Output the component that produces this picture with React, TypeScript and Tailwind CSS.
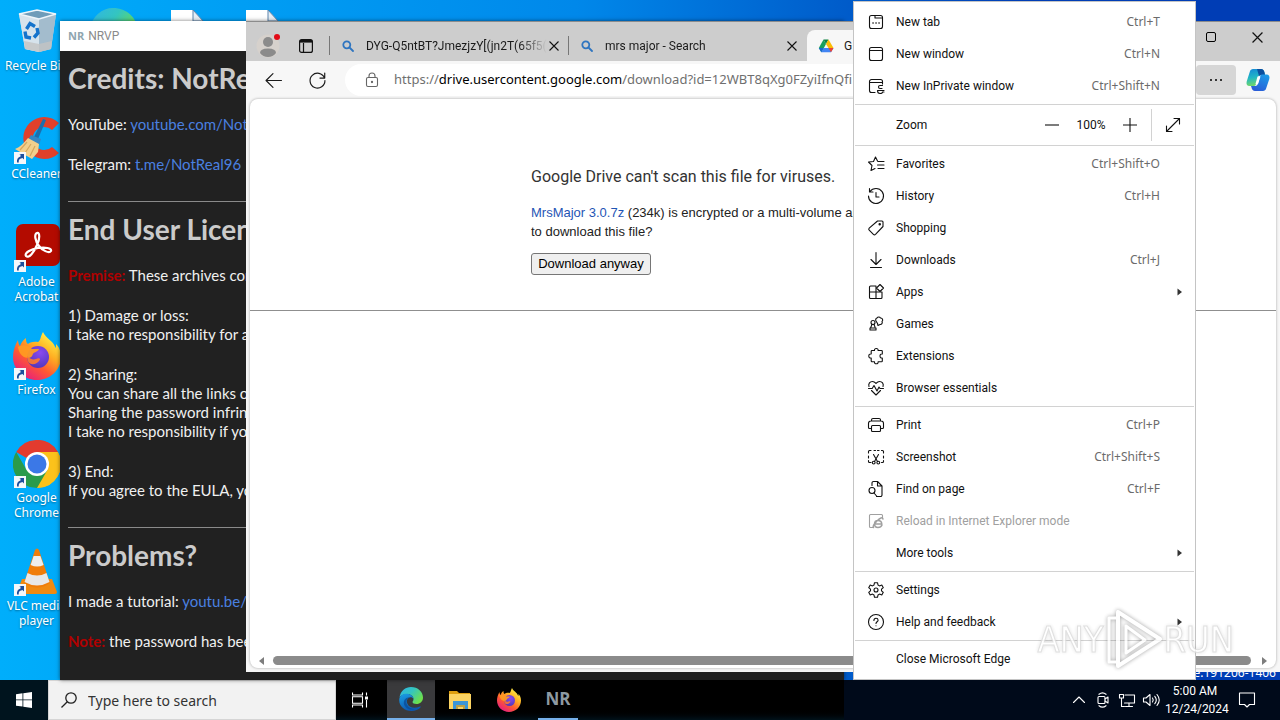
import type { ReactNode } from "react";

const ui = "font-['Noto_Sans','Open_Sans',sans-serif]";
const compact = "font-['Roboto','Noto_Sans',sans-serif]";

function Line({ size = 16, children, className = "" }: { size?: number; children: ReactNode; className?: string }) {
  return (
    <svg
      width={size}
      height={size}
      viewBox="0 0 16 16"
      fill="none"
      stroke="currentColor"
      strokeWidth="1.1"
      strokeLinecap="round"
      strokeLinejoin="round"
      aria-hidden="true"
      className={`shrink-0 overflow-visible ${className}`}
    >
      {children}
    </svg>
  );
}

/* ---------- colour logos ---------- */

function EdgeLogo({ size, id }: { size: number; id: string }) {
  return (
    <svg width={size} height={size} viewBox="0 0 24 24" aria-hidden="true" className="shrink-0">
      <defs>
        <linearGradient id={`${id}a`} x1="0" y1="0" x2="1" y2="0.6">
          <stop offset="0" stopColor="#2fb4e8" />
          <stop offset="0.5" stopColor="#34c5c0" />
          <stop offset="1" stopColor="#6ee04a" />
        </linearGradient>
        <linearGradient id={`${id}b`} x1="0" y1="0" x2="0.4" y2="1">
          <stop offset="0" stopColor="#1a9fe6" />
          <stop offset="1" stopColor="#0d57b0" />
        </linearGradient>
      </defs>
      <path d="M0.5 10.500C1.500 4 6.500 0 12 0c7 0 12 5 12 10.500 0 4-3 6.500-6.500 6.500-2.500 0-4-1-4-2 0-.7 1-1 1-3 0-2.500-2.500-5-6-5S1.500 8.500.5 10.500z" fill={`url(#${id}a)`} />
      <path d="M0.300 12C.8 8.500 4 6.800 7.500 6.800c4 0 7 2.400 7 5.200-.8-1.500-2-2-3.200-1.800C8 10.800 7 14 8.500 17c2 4 7 4.800 12.500 2.500.6-.2 1 .2.600.7C19.500 22.800 16 24 12.500 24 5 24-.5 18.500.3 12z" fill={`url(#${id}b)`} />
      <path d="M11.300 10.200C7.500 11 6.500 15 8.200 18c1.600 2.800 4.300 4 7.300 3.900-3 1.500-8 .6-10-3.400-1.800-3.700 0-8.500 5.800-8.300z" fill="#0a4a96" opacity=".75" />
    </svg>
  );
}

function FirefoxLogo({ size, id }: { size: number; id: string }) {
  return (
    <svg width={size} height={size} viewBox="0 0 48 48" aria-hidden="true" className="shrink-0">
      <defs>
        <linearGradient id={`${id}a`} x1="0.85" y1="0.1" x2="0.25" y2="0.95">
          <stop offset="0" stopColor="#fff14a" />
          <stop offset="0.35" stopColor="#ffae22" />
          <stop offset="0.65" stopColor="#ff5a30" />
          <stop offset="1" stopColor="#e8207c" />
        </linearGradient>
        <radialGradient id={`${id}b`} cx="0.6" cy="0.3" r="0.8">
          <stop offset="0" stopColor="#8a4af0" />
          <stop offset="1" stopColor="#4a35b5" />
        </radialGradient>
      </defs>
      <path d="M30 0c-3 5-2 8-5 10-5-1-9 1-10 2-2-1-2-4-2-6-3 2-5 5-6 8-1-1-2-4-2-6C2 13 0 19 0 25c0 13 11 23 24 23s24-10 24-23c0-6-2-10-5-13 0 2 0 3-.5 4C40 8 33 7 30 0z" fill={`url(#${id}a)`} />
      <circle cx="25" cy="25" r="11" fill={`url(#${id}b)`} />
      <path d="M5 15c5-3 10-2 14 2h7c-1 3-5 3-6 5-1 1 0 3-4 4-5 0-10-3-11-11z" fill="#ff9a22" opacity=".95" />
      <path d="M14 24c3 3 6 4 9 3 2-1 4-1 4 .5-2 4-7 6-10 4-2-1-3-4-3-7.500z" fill="#ff7a2a" opacity=".9" />
    </svg>
  );
}

function RecycleBin() {
  return (
    <svg width="48" height="48" viewBox="0 0 48 48" aria-hidden="true">
      <path d="M6 6 24 2l19 4-5 35-12 3-14-3z" fill="#c8d6e0" />
      <path d="M6 6l20 5v33l-14-3z" fill="#d6e3ec" />
      <path d="M26 11l17-5-5 35-12 3z" fill="#a3bccd" />
      <path d="M6 6 24 2l19 4-17 5z" fill="#6f9cb9" stroke="#eef5fa" strokeWidth="1.400" />
      <path d="M11 33l15 3 13-3-1 8-12 3-14-3z" fill="#c3c3c3" opacity=".8" />
      <g fill="none" stroke="#1473cc" strokeWidth="3.400">
        <path d="M13.500 21l3.500-5.500 5 3" />
        <path d="M24 20l1 5-4 4.500" />
        <path d="M18 30l-5-1-1-5.500" />
      </g>
    </svg>
  );
}

function CCleanerLogo() {
  return (
    <svg width="48" height="48" viewBox="0 0 48 48" aria-hidden="true">
      <path d="M46 7A21 21 0 1 0 46 37l-7-6a11.500 11.500 0 1 1 0-17z" fill="#e0402b" />
      <path d="M30 3l3 1-8 19-4-2z" fill="#1b6fae" />
      <path d="M18 19l10 4-2 6-11-5z" fill="#3587c4" />
      <path d="M15 22l11 6-1 8-6 7L2 33c5-2 9-6 13-11z" fill="#f2cf8c" />
      <path d="M14 26l-7 8M18 28l-6 9M22 30l-5 10" stroke="#d5a75e" strokeWidth="1.200" />
    </svg>
  );
}

function AcrobatLogo() {
  return (
    <svg width="48" height="48" viewBox="0 0 48 48" aria-hidden="true">
      <rect x="3" y="0" width="44" height="42" rx="7" fill="#b30b00" />
      <path d="M13 32c-2-3 5-7 12-8s14 0 13 3c-2 3-9-1-12-5-4-5-5-12-2-13s3 6 0 12c-3 7-8 14-11 11z" fill="none" stroke="#fff" strokeWidth="2.200" />
    </svg>
  );
}

function ChromeLogo() {
  return (
    <svg width="48" height="48" viewBox="0 0 48 48" aria-hidden="true">
      <path d="M24 24 3.200 12A24 24 0 0 1 44.800 12z" fill="#e33b2e" />
      <path d="M24 24V0a24 24 0 0 1 20.800 12H24z" fill="#e33b2e" />
      <path d="M24 24 44.800 12A24 24 0 0 1 24 48z" fill="#fcc21b" />
      <path d="M24 12h20.800A24 24 0 0 1 24 48l10.400-18z" fill="#fcc21b" />
      <path d="M3.200 12A24 24 0 0 0 24 48l10.400-18L24 24l-10.400 6z" fill="#2a9b4b" />
      <circle cx="24" cy="24" r="12" fill="#fff" />
      <circle cx="24" cy="24" r="9.500" fill="#3b78e7" />
    </svg>
  );
}

function VlcLogo() {
  return (
    <svg width="48" height="48" viewBox="0 0 48 48" aria-hidden="true">
      <path d="M9 31h30l5 13a2 2 0 0 1-2 2H6a2 2 0 0 1-2-2z" fill="#f08a12" />
      <path d="M22 2q2-3 4 0l11 33q-13 9-26 0z" fill="#f07d0a" />
      <path d="M20.600 8h6.800l3.200 9q-6.500 3-13 0z" fill="#eee" />
      <path d="M14.500 25q9.500 5 19 0l3 9q-12.500 7-25 0z" fill="#e8e8e8" />
    </svg>
  );
}

function ExplorerLogo() {
  return (
    <svg width="24" height="24" viewBox="0 0 24 24" aria-hidden="true">
      <path d="M1 3h8l2 2h11v4H1z" fill="#dfa010" />
      <path d="M1 6h22v15H1z" fill="#fcd462" />
      <path d="M5 13h15v8h-3v-4H8v4H5z" fill="#3b96d6" />
      <path d="M8 17h9v4h-2v-2h-5v2H8z" fill="#7a6a2a" opacity=".5" />
    </svg>
  );
}

function DriveLogo() {
  return (
    <svg width="16" height="16" viewBox="0 0 16 16" aria-hidden="true" className="shrink-0">
      <path d="M5.500 1.500 8 6 3.500 14.300.8 10z" fill="#18a05d" />
      <path d="M5.500 1.500h5L8 6z" fill="#0b8043" />
      <path d="M10.500 1.500 15.500 10h-5L8 6z" fill="#fbbc04" />
      <path d="M5.500 10h10l-2.500 4.300H3.200z" fill="#4285f4" />
      <path d="M10.500 10h5L13 14.300z" fill="#ea4335" />
      <path d="M.8 10h4.700L3.200 14.300z" fill="#1967d2" />
    </svg>
  );
}

function CopilotLogo() {
  return (
    <svg width="24" height="24" viewBox="0 0 24 24" aria-hidden="true">
      <defs>
        <linearGradient id="copA" x1="0" y1="0" x2="0.2" y2="1">
          <stop offset="0" stopColor="#1487d8" />
          <stop offset="0.55" stopColor="#22b7c4" />
          <stop offset="1" stopColor="#6fd66b" />
        </linearGradient>
        <linearGradient id="copB" x1="0.8" y1="0" x2="0.3" y2="1">
          <stop offset="0" stopColor="#1c9be8" />
          <stop offset="1" stopColor="#2a5bd7" />
        </linearGradient>
      </defs>
      <path d="M7 1h8c2 0 3 1.500 3.500 3.500L19 7h-4c-2 0-2.500 1-3 2.500L10 16c-.5 1.500-1 2-3 2H3.500C1 18 0 16 .7 13.500L3.800 3.800C4.300 2 5.500 1 7 1z" fill="url(#copA)" />
      <path d="M11 1h4c2 0 3 1.500 3.500 3.500L19 7h-4l-2 1z" fill="#0c4f9e" />
      <path d="M17 23H9c-2 0-3-1.500-3.500-3.500L5 18h4c2 0 2.500-1 3-2.500L14 8.500C14.500 7 15 6.500 17 6.500h3.500c2.500 0 3.500 2 2.800 4.500l-3.100 9.200C19.700 22 18.500 23 17 23z" fill="url(#copB)" />
      <path d="M11.500 8.500h3L12 16H9.500z" fill="#fff" />
    </svg>
  );
}

function ShortcutArrow() {
  return (
    <svg width="12" height="12" viewBox="0 0 12 12" aria-hidden="true" className="absolute bottom-0 left-px">
      <rect width="12" height="12" fill="#f4f7fa" />
      <path d="M3 10.500C2.500 7 4 5 6.500 4.500V2.500L5 2h5v5.500L8.500 6 7 6.500C5 7 4.500 8.500 4.800 10.500z" fill="#1d4f9c" />
    </svg>
  );
}

/* ---------- desktop ---------- */

const shortcuts: { label: string[]; icon: ReactNode; link: boolean }[] = [
  { label: ["Recycle Bin"], icon: <RecycleBin />, link: false },
  { label: ["CCleaner"], icon: <CCleanerLogo />, link: true },
  { label: ["Adobe", "Acrobat"], icon: <AcrobatLogo />, link: true },
  { label: ["Firefox"], icon: <FirefoxLogo size={48} id="ffd" />, link: true },
  { label: ["Google", "Chrome"], icon: <ChromeLogo />, link: true },
  { label: ["VLC media", "player"], icon: <VlcLogo />, link: true },
];

function DocIcon() {
  return (
    <svg width="32" height="44" viewBox="0 0 32 44" aria-hidden="true" className="mt-0.5">
      <path d="M0 0h22l10 11v33H0z" fill="#fff" />
      <path d="M22 0l10 11H22z" fill="#e6eef5" stroke="#5b83ab" strokeWidth="1" />
    </svg>
  );
}

function Desktop() {
  return (
    <div className="flex">
      <ul className="flex w-[73px] flex-col pt-2">
        {shortcuts.map((s) => (
          <li key={s.label[0]} className="flex h-[108px] flex-col items-center gap-0.5">
            <span className="relative block h-12 w-12">
              {s.icon}
              {s.link && <ShortcutArrow />}
            </span>
            <span className={`${ui} text-center text-[12px] leading-[15px] whitespace-nowrap text-white [text-shadow:0_1px_2px_#0006]`}>
              {s.label.map((l) => (
                <span key={l} className="block">{l}</span>
              ))}
            </span>
          </li>
        ))}
      </ul>
      <div className="flex gap-[34px] pt-2 pl-4">
        <EdgeLogo size={48} id="edd" />
        <div className="flex gap-[43px]">
          <DocIcon />
          <DocIcon />
        </div>
      </div>
    </div>
  );
}

/* ---------- NRVP window ---------- */

function H({ children }: { children: ReactNode }) {
  return <h2 className="mb-[17px] text-[28px] leading-10 font-bold text-[#cbcbcb]">{children}</h2>;
}

function Blue({ children }: { children: ReactNode }) {
  return <a href="#" className="text-[#4a80e0]">{children}</a>;
}

function NrvpWindow() {
  const section = "border-b border-[#8a8a8a] pt-[7px] pb-[27px] last:border-b-0";
  const body = "flex flex-col gap-[21px]";
  return (
    <section aria-label="NRVP" className="absolute top-[21px] bottom-0 left-[60px] w-[784px] overflow-hidden bg-[#212121] shadow-[0_0_4px_#0008]">
      <header className="flex h-[30px] items-center gap-1 bg-white px-2">
        <span className="font-['Open_Sans',sans-serif] text-[11px] font-bold text-[#8fa6b0]">NR</span>
        <h1 className={`${compact} text-[12px] text-[#8a8a8a]`}>NRVP</h1>
      </header>
      <div className="px-2 font-['Lato','Noto_Sans',sans-serif] text-[15px] leading-[19px] whitespace-nowrap text-[#f0f0f0]">
        <div className={section}>
          <H>Credits: NotReal96</H>
          <div className={body}>
            <p>YouTube: <Blue>youtube.com/NotReal96</Blue></p>
            <p>Telegram: <Blue>t.me/NotReal96</Blue></p>
          </div>
        </div>
        <div className={section}>
          <H>End User License</H>
          <div className={body}>
            <p><b className="text-[#b00000]">Premise:</b> These archives contain</p>
            <p>1) Damage or loss:<br />I take no responsibility for any</p>
            <p>2) Sharing:<br />You can share all the links of<br />Sharing the password infringes<br />I take no responsibility if you</p>
            <p>3) End:<br />If you agree to the EULA, you</p>
          </div>
        </div>
        <div className={section}>
          <H>Problems?</H>
          <div className={body}>
            <p>I made a tutorial: <Blue>youtu.be/</Blue></p>
            <p><b className="text-[#b00000]">Note:</b> the password has been</p>
          </div>
        </div>
      </div>
    </section>
  );
}

/* ---------- browser window ---------- */

function TabSearchIcon() {
  return (
    <svg width="12" height="12" viewBox="0 0 12 12" fill="none" stroke="#2f75c0" strokeWidth="1.800" aria-hidden="true" className="shrink-0">
      <circle cx="4.800" cy="4.800" r="3.500" />
      <path d="M7.500 7.500l3.500 3.500" strokeLinecap="round" />
    </svg>
  );
}

function Cross({ size = 10 }: { size?: number }) {
  return (
    <svg width={size} height={size} viewBox="0 0 10 10" stroke="#111" strokeWidth="1.100" aria-hidden="true">
      <path d="M.5.5l9 9M9.500.5l-9 9" />
    </svg>
  );
}

function Tab({ title }: { title: string }) {
  return (
    <div className="flex w-[239px] items-center border-l border-[#777] pr-2 pl-3">
      <TabSearchIcon />
      <span className={`${compact} ml-3 flex-1 whitespace-nowrap [mask-image:linear-gradient(to_right,#000_85%,transparent)]`}>{title}</span>
      <button type="button" aria-label="Close tab" className="p-0.5"><Cross /></button>
    </div>
  );
}

function BrowserWindow() {
  return (
    <section aria-label="Browser" className={`${ui} absolute top-[21px] right-0 bottom-2 left-[246px] flex flex-col overflow-hidden bg-[#f7f7f7] text-[12px] text-[#1b1b1b]`}>
      <header className="flex h-10 shrink-0 items-stretch border-t border-[#8c8c8c] bg-[#cdcdcd]">
        <div className="flex w-[83px] items-center gap-[17px] pt-2 pl-2.5">
          <button type="button" aria-label="Profile">
            <svg width="26" height="26" viewBox="0 0 26 26" className="overflow-visible" aria-hidden="true">
              <circle cx="12" cy="13" r="11.500" fill="#d6d1cc" />
              <circle cx="12" cy="9" r="5" fill="#8b8b8b" />
              <path d="M4 20q0-4.500 8-4.500t8 4.500q-3 4-8 4t-8-4z" fill="#8b8b8b" />
              <circle cx="21" cy="4" r="3" fill="#e30b17" />
            </svg>
          </button>
          <button type="button" aria-label="Tab actions">
            <svg width="14" height="14" viewBox="0 0 14 14" fill="none" stroke="#111" strokeWidth="1.200" aria-hidden="true">
              <rect x=".6" y=".6" width="12.800" height="12.800" rx="2" />
              <path d="M4.500 4v9" />
              <path d="M1 2.300h12" strokeWidth="2.600" />
            </svg>
          </button>
        </div>
        <div className="flex items-stretch pt-3.5 pb-1.5">
          <Tab title="DYG-Q5ntBT?JmezjzY[(jn2T(65f5(" />
          <Tab title="mrs major - Search" />
        </div>
        <div className="mt-2 -mb-px flex w-60 items-center gap-2.5 rounded-t-lg bg-[#f7f7f7] px-[11px]">
          <DriveLogo />
          <span className={compact}>G</span>
        </div>
        <div className="ml-auto flex h-[30px]">
          <button type="button" aria-label="Maximize" className="flex w-[46px] items-center justify-center">
            <span className="h-2.5 w-2.5 rounded-[2px] border border-black" />
          </button>
          <button type="button" aria-label="Close" className="flex w-[46px] items-center justify-center"><Cross size={11} /></button>
        </div>
      </header>

      <div className="flex h-[38px] shrink-0 items-center pr-2.5 pl-[19px]">
        <button type="button" aria-label="Back" className="mr-[27px]">
          <Line size={17}><path d="M15.500 8H1M7.500 1.500L1 8l6.500 6.500" /></Line>
        </button>
        <button type="button" aria-label="Refresh" className="mr-[19px]">
          <Line size={17}><path d="M14.500 5.500A7 7 0 1 0 15 8M14.800 1v4.700H10.300" /></Line>
        </button>
        <div className="flex h-8 flex-1 items-center rounded-l-full bg-white pl-[19px]">
          <Line className="text-[#666]">
            <rect x="2.500" y="5.500" width="11" height="9" rx="1.500" />
            <path d="M5 5.500V4a3 3 0 0 1 6 0v1.500" />
            <circle cx="8" cy="10" r=".6" fill="currentColor" />
          </Line>
          <span className="ml-3.5 text-[13px] whitespace-nowrap text-[#6f6f6f]">
            https://<span className="text-black">drive.usercontent.google.com</span>/download?id=12WBT8qXg0FZyiIfnQfi
          </span>
        </div>
        <button type="button" aria-label="Settings and more" className="flex h-[30px] w-10 items-center justify-center gap-[3px] rounded bg-[#d6d6d6]">
          <i className="h-0.5 w-0.5 rounded-full bg-black" />
          <i className="h-0.5 w-0.5 rounded-full bg-black" />
          <i className="h-0.5 w-0.5 rounded-full bg-black" />
        </button>
        <button type="button" aria-label="Copilot" className="ml-2.5"><CopilotLogo /></button>
      </div>

      <div className="mx-1 mb-1 flex flex-1 flex-col rounded-lg bg-white shadow-[0_0_3px_#0005]">
        <main className="flex-1 font-['Liberation_Sans',Arial,sans-serif]">
          <div className="border-b border-[#8f8f8f] pt-[68px] pb-[35px] pl-[281px] whitespace-nowrap">
            <h1 className={`${compact} text-[16px] leading-5 text-[#333]`}>Google Drive can't scan this file for viruses.</h1>
            <p className="mt-4 text-[13px] leading-[19px] text-[#222]">
              <a href="#" className="text-[#1f55b5]">MrsMajor 3.0.7z</a> (234k) is encrypted or a multi-volume archive<br />to download this file?
            </p>
            <button type="button" className="mt-3 h-[22px] w-[120px] rounded-[3px] border border-[#767676] bg-[#efefef] text-[13px] leading-5 text-black">
              Download anyway
            </button>
          </div>
        </main>
        <div className="mb-[3px] flex h-[9px] items-center gap-2 px-2" aria-hidden="true">
          <svg width="7" height="8" viewBox="0 0 7 8"><path d="M6 0v8L1 4z" fill="#7d7d7d" /></svg>
          <span className="h-full flex-1 rounded-full bg-[#8b8b8b]" />
          <svg width="9" height="8" viewBox="0 0 9 8"><path d="M3 0v8l5-4z" fill="#7d7d7d" /></svg>
        </div>
      </div>
    </section>
  );
}

/* ---------- settings menu ---------- */

type Item = { label: string; keys?: string; more?: boolean; off?: boolean; icon?: ReactNode };

const groups: Item[][] = [
  [
    {
      label: "New tab", keys: "Ctrl+T",
      icon: <Line><rect x="1.500" y="1.500" width="13" height="13" rx="2" /><path d="M7 1.500V4h7.500" /><path d="M5 9h.1M8 9h.1M11 9h.1" strokeWidth="1.600" /></Line>,
    },
    { label: "New window", keys: "Ctrl+N", icon: <Line><rect x="1.500" y="1.500" width="13" height="13" rx="2" /><path d="M1.500 4.500h13" /></Line> },
    {
      label: "New InPrivate window", keys: "Ctrl+Shift+N",
      icon: <Line><path d="M7 14.500H3.500a2 2 0 0 1-2-2v-9a2 2 0 0 1 2-2h9a2 2 0 0 1 2 2V6M1.500 4.500h13" /><path d="M14.500 7.500h-2.500q-1.500 0-1.500 1.500t1.500 1.500h2M16 12.500h-6.500q0 3 2.500 3t2.500-1.500h1.500" /></Line>,
    },
  ],
  [
    {
      label: "Favorites", keys: "Ctrl+Shift+O",
      icon: <Line><path d="M9.500 5 7.500 1 5.500 5.500.5 6l3.500 3.500-1 5L7 12.500M10 5.500h6M9.500 9H16M10 12.500h6" /></Line>,
    },
    { label: "History", keys: "Ctrl+H", icon: <Line><path d="M2 3.500A7.500 7.500 0 1 1 .5 8M1.500.500V4H5M8 4.500V9h3" /></Line> },
    {
      label: "Shopping",
      icon: <Line><path d="M9.500 1H14a1 1 0 0 1 1 1v4.500L7.500 14.300a1.500 1.500 0 0 1-2.100 0L1.200 10.200a1.500 1.500 0 0 1 0-2.100z" /><circle cx="11.700" cy="4.300" r=".7" fill="currentColor" /></Line>,
    },
    { label: "Downloads", keys: "Ctrl+J", icon: <Line><path d="M8 .5v11.500M3 7.500l5 5 5-5M2.500 15.500h11" /></Line> },
    {
      label: "Apps", more: true,
      icon: <Line><path d="M8 2H2.500a1 1 0 0 0-1 1v10.500a1 1 0 0 0 1 1H13a1 1 0 0 0 1-1V8H1.500M8 2v12.500" /><path d="M12 .5L15.500 4 12 7.500 8.500 4z" fill="#fff" /></Line>,
    },
    {
      label: "Games",
      icon: <Line><circle cx="5" cy="6.500" r="2" /><path d="M4 8.500 2.500 12M6 8.500 7 11M2 14h6v-2H2z" /><path d="M8 5a2 2 0 0 1 1-3 2 2 0 0 1 3.500 0A2 2 0 0 1 14 5.500 2 2 0 0 1 12 8.500L10 9.500 9.500 7.500z" /></Line>,
    },
    {
      label: "Extensions",
      icon: <Line><path d="M4 2.500h2.500q-.2-2 1.800-2t1.800 2h3.400a.8.800 0 0 1 .8.800V6q-2.300-.3-2.300 2t2.300 2v3a.8.800 0 0 1-.8.800h-3.400q.2 2-1.800 2t-1.800-2H4a.8.800 0 0 1-.8-.8V10Q.8 10.300.8 8t2.400-2V3.300A.8.800 0 0 1 4 2.500z" /></Line>,
    },
    {
      label: "Browser essentials",
      icon: <Line><path d="M1 6.500C0 3.500 2 1.500 4.500 1.500 6.500 1.500 7.500 3 8 3.500c.5-.5 1.500-2 3.500-2C14 1.500 16 3.500 15 6.500M3.500 10.500 8 15l4.500-4.500M.5 8.500h3.700L6 5.500l3 5.500 2-4 1 1.500h3.500" /></Line>,
    },
  ],
  [
    {
      label: "Print", keys: "Ctrl+P",
      icon: <Line><path d="M3.500 4V3a1.500 1.500 0 0 1 1.500-1.500h6A1.500 1.500 0 0 1 12.500 3v1M3.500 11.500H1.500a1 1 0 0 1-1-1V6.500A2.500 2.500 0 0 1 3 4h10a2.500 2.500 0 0 1 2.500 2.500v4a1 1 0 0 1-1 1h-2" /><rect x="3.500" y="8.500" width="9" height="6" rx="1" /></Line>,
    },
    {
      label: "Screenshot", keys: "Ctrl+Shift+S",
      icon: <Line><path d="M.5 4V2.500a1 1 0 0 1 1-1H3M6 1.500h1.500M9.500 1.500H11M13.500 1.500h1a1 1 0 0 1 1 1V4M15.500 7v2M.5 7v2M.5 11.500v1a1 1 0 0 0 1 1H3M15.500 11.500v1a1 1 0 0 1-1 1h-1M5.500 5.500l4 7M10.500 5.500l-4 7" /><circle cx="5.700" cy="13.600" r="1.400" /><circle cx="10.300" cy="13.600" r="1.400" /></Line>,
    },
    {
      label: "Find on page", keys: "Ctrl+F",
      icon: <Line><path d="M4 4.500V2a1.500 1.500 0 0 1 1.500-1.500H9.500L14 5v9a1.500 1.500 0 0 1-1.500 1.500H8.500M9.500.5V5H14" /><circle cx="4" cy="9.500" r="3" /><path d="M6 12l3 3.500" /></Line>,
    },
    {
      label: "Reload in Internet Explorer mode", off: true,
      icon: <Line><path d="M5 14.500H2.500a1 1 0 0 1-1-1v-11a1 1 0 0 1 1-1h11a1 1 0 0 1 1 1V5" /><path d="M14 12q-1 2.500-4 2.500-3.500 0-3.500-3.500T10 7.500q3.500 0 3.800 3.500H7M5.500 14.500Q4 13 9 8t6-2" strokeWidth="1.500" /></Line>,
    },
    { label: "More tools", more: true },
  ],
  [
    {
      label: "Settings",
      icon: <Line><circle cx="8" cy="8" r="2" /><path d="M6.500.700h3l.5 2.300 1.500.900 2.300-.8 1.500 2.600L13.500 7.200v1.600l1.800 1.500-1.500 2.600-2.300-.8-1.500.9-.5 2.300h-3L6 13l-1.500-.9-2.300.8-1.500-2.600 1.800-1.500V7.200L.7 5.700l1.500-2.600 2.300.8L6 3z" /></Line>,
    },
    {
      label: "Help and feedback", more: true,
      icon: <Line><circle cx="8" cy="8" r="7.500" /><path d="M5.900 6.500Q6 4.300 8 4.300t2.100 1.900C10.100 7.800 8 7.800 8 9.500M8 11.700v.1" /></Line>,
    },
  ],
  [{ label: "Close Microsoft Edge" }],
];

function MenuRow({ item }: { item: Item }) {
  return (
    <button
      type="button"
      role="menuitem"
      disabled={item.off}
      className={`flex h-8 w-full items-center pr-[11px] pl-[13px] text-left ${item.off ? "text-[#a0a0a0]" : "text-[#111]"}`}
    >
      <span className="mr-3 flex h-4 w-4 items-center justify-center">{item.icon}</span>
      <span className="flex-1">{item.label}</span>
      <span className={`${ui} text-[#6b6b6b]`}>{item.keys}</span>
      <span className="flex w-[23px] justify-end">
        {item.more && <svg width="6" height="8" viewBox="0 0 6 8" aria-hidden="true"><path d="M.5.5v7L5 4z" fill="#333" /></svg>}
      </span>
    </button>
  );
}

function ZoomRow() {
  return (
    <div className="flex h-10 items-center pl-[41px]">
      <span className="flex-1">Zoom</span>
      <button type="button" aria-label="Zoom out"><Line><path d="M1 8h14" strokeLinecap="butt" /></Line></button>
      <span className="w-[62px] text-center">100%</span>
      <button type="button" aria-label="Zoom in"><Line><path d="M1 8h14M8 1v14" strokeLinecap="butt" /></Line></button>
      <span className="ml-[13px] h-8 w-px bg-[#d2d2d2]" />
      <button type="button" aria-label="Full screen" className="flex w-[42px] justify-center">
        <Line><path d="M1.500 14.500l13-13M9 1.500h5.500V7M1.500 9v5.500H7" /></Line>
      </button>
    </div>
  );
}

function SettingsMenu() {
  return (
    <div role="menu" className={`${compact} absolute top-px bottom-0 left-[853px] w-[343px] border border-[#c4c4c4] bg-white px-px pt-1 text-[12px] text-[#111]`}>
      {groups.map((g, i) => (
        <div key={g[0].label}>
          {i === 1 && (
            <>
              <hr className="mt-0.5 border-[#d2d2d2]" />
              <ZoomRow />
              <hr className="mb-0.5 border-[#d2d2d2]" />
            </>
          )}
          {i > 1 && <hr className="my-0.5 border-[#d2d2d2]" />}
          {g.map((item) => <MenuRow key={item.label} item={item} />)}
        </div>
      ))}
    </div>
  );
}

function Watermark() {
  const word = "font-['Liberation_Sans_Narrow','DejaVu_Sans_Condensed',sans-serif] text-[36px] leading-none text-white [-webkit-text-stroke:1px_#d9d9d9] [text-shadow:0_0_4px_#0003]";
  return (
    <div className="pointer-events-none absolute right-[46px] bottom-2 flex h-16 items-center opacity-80">
      <span className={word}>ANY</span>
      <svg width="60" height="64" viewBox="0 0 60 64" fill="none" stroke="#fff" strokeWidth="4" strokeLinejoin="round" aria-hidden="true" className="drop-shadow-[0_0_2px_#0007]">
        <path d="M14 4v54l42-27z" />
        <path d="M12 10H5v44h7M22 18v27l19-13z" strokeWidth="3" />
      </svg>
      <span className={word}>RUN</span>
    </div>
  );
}

/* ---------- taskbar ---------- */

function Taskbar() {
  return (
    <footer className="flex h-10 shrink-0 bg-[#000a1a] text-white">
      <div className="flex w-[844px] bg-linear-to-b from-black from-70% to-[#00121a]">
        <button type="button" aria-label="Start" className="flex w-12 items-center justify-center bg-[#00141e]">
          <svg width="16" height="16" viewBox="0 0 16 16" fill="#fff" aria-hidden="true">
            <path d="M0 2.200l6.500-.9v6.200H0zM7.300 1.200L16 0v7.500H7.300zM0 8.300h6.500v6.300L0 13.700zM7.300 8.300H16V16l-8.700-1.300z" />
          </svg>
        </button>
        <label className="flex w-72 items-center gap-[11px] border border-[#d5d5d5] bg-[#f2f2f2] pl-3 text-[#222]">
          <svg width="16" height="16" viewBox="0 0 16 16" fill="none" stroke="#222" strokeWidth="1.300" aria-hidden="true" className="shrink-0">
            <circle cx="10" cy="6" r="5.200" />
            <path d="M6.300 9.700L.5 15.500" />
          </svg>
          <input
            type="text"
            aria-label="Search"
            placeholder="Type here to search"
            className={`${ui} w-full bg-transparent text-[14px] outline-none placeholder:text-[#333]`}
          />
        </label>
        <button type="button" aria-label="Task view" className="flex w-[51px] items-center justify-center pr-1">
          <svg width="16" height="16" viewBox="0 0 16 16" fill="none" stroke="#fff" strokeWidth="1.100" aria-hidden="true">
            <path d="M.5.500v2.500h10V.500M.5 15.500v-2.500h10v2.500M.5 4.800h10v6.400H.5zM14.500.5v3M14.500 8v7.500" />
            <path d="M13 4.500h3v3h-3z" fill="#fff" stroke="none" />
          </svg>
        </button>
        <button type="button" aria-label="Microsoft Edge" className="flex w-12 items-center justify-center border-b-2 border-[#76b0ea] bg-[#3a3a3c]">
          <EdgeLogo size={24} id="edt" />
        </button>
        <button type="button" aria-label="File Explorer" className="flex w-[50px] items-center justify-center"><ExplorerLogo /></button>
        <button type="button" aria-label="Firefox" className="flex w-12 items-center justify-center"><FirefoxLogo size={24} id="fft" /></button>
        <button type="button" className="ml-[5px] flex w-10 items-center justify-center border-b-2 border-[#76b0ea] font-['Open_Sans',sans-serif] text-[17px] font-bold text-[#8e9aa2]">
          NR
        </button>
      </div>
      <div className={`${compact} ml-auto flex items-center text-[12px]`}>
        <div className="flex items-center gap-2">
          <Line><path d="M2.500 10.500L8 5l5.500 5.500" /></Line>
          <Line><rect x="3" y="4.500" width="7" height="7" rx="1" /><path d="M10 7l3-2v6l-3-2M4 2.300Q7.500-.5 11 2.300M4 13.700q3.500 2.800 7 0" /></Line>
          <Line><path d="M6 3h9.500v8H5.500M10 11v3.500M6.500 14.500h7M.5 2.500h4v3.500h-4zM2.500 6v8.500h3" /></Line>
          <Line><path d="M.5 6v4H3l4 3.500v-11L3 6zM9.500 6q1.500 2 0 4M11.800 4.300q3 3.700 0 7.400M14 2.500q4.500 5.500 0 11" /></Line>
        </div>
        <p className="mx-1.5 w-[60px] text-center leading-[18px] whitespace-nowrap"><span className="block">5:00 AM</span><span className="block">12/24/2024</span></p>
        <button type="button" aria-label="Notifications" className="mr-[25px] ml-2">
          <Line><path d="M.5 1h15v11.500h-5L8 15l-2.500-2.500h-5z" /></Line>
        </button>
      </div>
    </footer>
  );
}

export default function App() {
  return (
    <div className="flex h-screen flex-col overflow-hidden">
      <div className="relative min-h-0 flex-1 bg-linear-to-r from-[#00aefb] via-[#0088ea] via-45% to-[#003db5] to-80%">
        <Desktop />
        <p className={`${ui} absolute right-1 -bottom-px text-[12px] leading-4 text-white`}>Build 19041.vb_release.191206-1406</p>
        <NrvpWindow />
        <BrowserWindow />
        <SettingsMenu />
        <Watermark />
      </div>
      <Taskbar />
    </div>
  );
}
